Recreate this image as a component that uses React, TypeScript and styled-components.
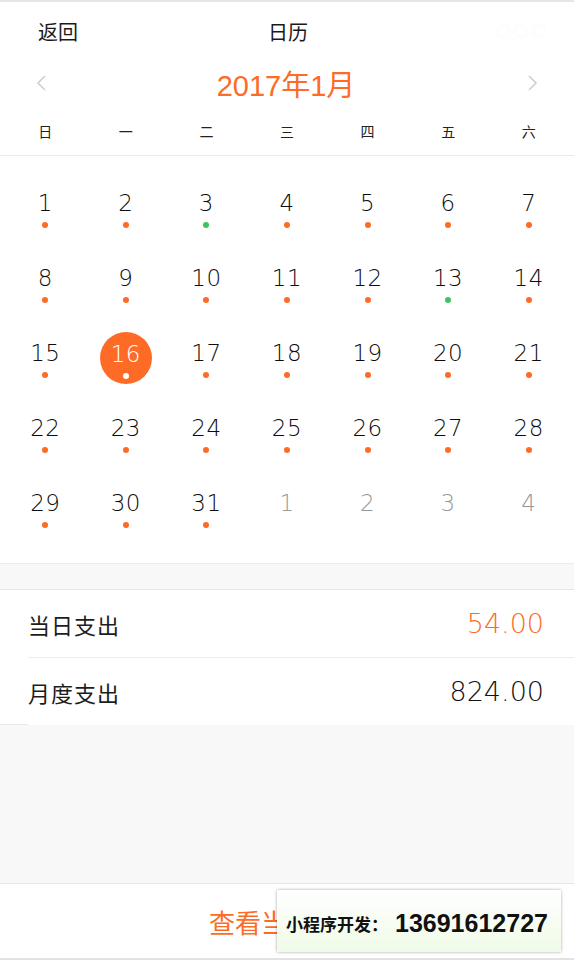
import React from "react";
import styled, { createGlobalStyle } from "styled-components";

const Global = createGlobalStyle`
  html, body { margin: 0; padding: 0; background: #f8f8f8; }
  body { font-family: "Liberation Sans", "Noto Sans CJK SC", sans-serif; }
  * { box-sizing: border-box; }
`;

const ORANGE = "#fd6b26";
const GREEN = "#3ec45c";

const Page = styled.div`
  width: 574px;
  height: 960px;
  display: flex;
  flex-direction: column;
  background: #f8f8f8;
  border-top: 2px solid #e6e6e6;
  position: relative;
  overflow: hidden;
`;

const Calendar = styled.div`
  background: #fff;
  border-bottom: 1px solid #ececec;
`;

const TopBar = styled.div`
  height: 58px;
  display: grid;
  grid-template-columns: 1fr auto 1fr;
  align-items: center;
  padding: 0 30px 0 38px;
  font-family: "Noto Sans CJK SC", sans-serif;
  font-size: 20px;
  color: #1a1a1a;
`;

const TopTitle = styled.div`
  transform: translateX(-3px);
`;

const Dots = styled.div`
  justify-self: end;
  display: flex;
  gap: 8px;
`;

const MenuDot = styled.span`
  width: 10px;
  height: 10px;
  border-radius: 50%;
  background: #fff;
  box-shadow: 0 0 5px rgba(0, 0, 0, 0.045);
`;

const MonthNav = styled.div`
  height: 46px;
  display: flex;
  align-items: center;
  justify-content: space-between;
  padding: 0 34px;
`;

const MonthTitle = styled.div`
  color: ${ORANGE};
  font-family: "Liberation Sans", "Noto Sans CJK SC", sans-serif;
  font-size: 29px;
  transform: translateX(-1px);
`;

const Chevron = styled.svg`
  width: 16px;
  height: 20px;
`;

const WeekRow = styled.div`
  height: 50px;
  display: grid;
  grid-template-columns: repeat(7, 1fr);
  align-items: center;
  padding: 0 5px;
  border-bottom: 1px solid #e9e9e9;
  font-family: "Noto Sans CJK SC", sans-serif;
  font-size: 14px;
  color: #222;
  text-align: center;
`;

const DayGrid = styled.div`
  display: grid;
  grid-template-columns: repeat(7, 1fr);
  grid-auto-rows: 75px;
  padding: 26px 5px 6px;
`;

const DayCell = styled.div`
  display: flex;
  justify-content: center;
  align-items: flex-start;
`;

const DayInner = styled.div<{ $selected?: boolean }>`
  width: 52px;
  height: 52px;
  border-radius: 50%;
  background: ${(p) => (p.$selected ? ORANGE : "transparent")};
  display: flex;
  flex-direction: column;
  align-items: center;
  padding-top: ${(p) => (p.$selected ? 8 : 7)}px;
`;

const DayNum = styled.div<{ $muted?: boolean; $selected?: boolean }>`
  height: 28px;
  line-height: 28px;
  font-family: "DejaVu Sans", sans-serif;
  font-weight: 300;
  font-size: 23px;
  letter-spacing: 0.5px;
  color: ${(p) => (p.$selected ? "#fff" : p.$muted ? "#999" : "#0d0d0d")};
`;

const Dot = styled.span<{ $color: string }>`
  margin-top: 5px;
  width: 6px;
  height: 6px;
  border-radius: 50%;
  background: ${(p) => p.$color};
`;

const Gap = styled.div`
  height: 26px;
  border-bottom: 1px solid #e6e6e6;
`;

const Summary = styled.div`
  background: #fff;
  position: relative;
  &::after {
    content: "";
    position: absolute;
    left: 0;
    bottom: 0;
    width: 28px;
    height: 1px;
    background: #e9e9e9;
  }
`;

const SummaryRow = styled.div<{ $last?: boolean }>`
  height: ${(p) => (p.$last ? 67 : 68)}px;
  margin-left: 28px;
  padding-right: 30px;
  display: flex;
  align-items: center;
  justify-content: space-between;
  border-bottom: ${(p) => (p.$last ? "none" : "1px solid #ececec")};
`;

const Label = styled.div`
  font-family: "Noto Sans CJK SC", sans-serif;
  font-size: 22px;
  color: #1d1d1d;
  letter-spacing: 1px;
`;

const Amount = styled.div<{ $accent?: boolean }>`
  font-family: "DejaVu Sans", sans-serif;
  font-size: 27px;
  font-weight: 300;
  color: ${(p) => (p.$accent ? ORANGE : "#111")};
`;

const Spacer = styled.div`
  flex: 1;
`;

const Footer = styled.div`
  height: 77px;
  background: #fff;
  border-top: 1px solid #e6e6e6;
  border-bottom: 2px solid #e2e2e2;
  display: flex;
  align-items: center;
  justify-content: center;
  font-family: "Noto Sans CJK SC", sans-serif;
  font-size: 26px;
  color: ${ORANGE};
`;

const Promo = styled.div`
  position: absolute;
  left: 277px;
  top: 888px;
  width: 284px;
  height: 62px;
  background: linear-gradient(to bottom, #ffffff, #effbe7);
  box-shadow: 0 0 3px rgba(0, 0, 0, 0.35);
  display: flex;
  align-items: center;
  padding: 4px 0 0 9px;
  color: #111;
`;

const PromoLabel = styled.span`
  font-family: "Noto Sans CJK SC", sans-serif;
  font-weight: 700;
  font-size: 17px;
`;

const PromoPhone = styled.span`
  font-family: "Liberation Sans", sans-serif;
  font-weight: 700;
  font-size: 25px;
  margin-left: 7px;
`;

type Day = { n: number; muted?: boolean; dot?: string; selected?: boolean };

const days: Day[] = [];
for (let i = 1; i <= 31; i++) {
  days.push({
    n: i,
    dot: i === 3 || i === 13 ? GREEN : i === 16 ? "#fff" : ORANGE,
    selected: i === 16,
  });
}
for (let i = 1; i <= 4; i++) days.push({ n: i, muted: true });

const weekdays = ["日", "一", "二", "三", "四", "五", "六"];

export default function App() {
  return (
    <>
      <Global />
      <Page>
        <Calendar>
          <TopBar>
            <div>返回</div>
            <TopTitle>日历</TopTitle>
            <Dots>
              <MenuDot />
              <MenuDot />
              <MenuDot />
            </Dots>
          </TopBar>
          <MonthNav>
            <Chevron viewBox="0 0 16 20">
              <polyline points="11,3 4,10 11,17" fill="none" stroke="#cfcfcf" strokeWidth="1.6" />
            </Chevron>
            <MonthTitle>2017年1月</MonthTitle>
            <Chevron viewBox="0 0 16 20">
              <polyline points="5,3 12,10 5,17" fill="none" stroke="#cfcfcf" strokeWidth="1.6" />
            </Chevron>
          </MonthNav>
          <WeekRow>
            {weekdays.map((w) => (
              <div key={w}>{w}</div>
            ))}
          </WeekRow>
          <DayGrid>
            {days.map((d, i) => (
              <DayCell key={i}>
                <DayInner $selected={d.selected}>
                  <DayNum $muted={d.muted} $selected={d.selected}>
                    {d.n}
                  </DayNum>
                  {d.dot && <Dot $color={d.dot} />}
                </DayInner>
              </DayCell>
            ))}
          </DayGrid>
        </Calendar>
        <Gap />
        <Summary>
          <SummaryRow>
            <Label>当日支出</Label>
            <Amount $accent>54.00</Amount>
          </SummaryRow>
          <SummaryRow $last>
            <Label>月度支出</Label>
            <Amount>824.00</Amount>
          </SummaryRow>
        </Summary>
        <Spacer />
        <Footer>查看当月账单</Footer>
        <Promo>
          <PromoLabel>小程序开发：</PromoLabel>
          <PromoPhone>13691612727</PromoPhone>
        </Promo>
      </Page>
    </>
  );
}
